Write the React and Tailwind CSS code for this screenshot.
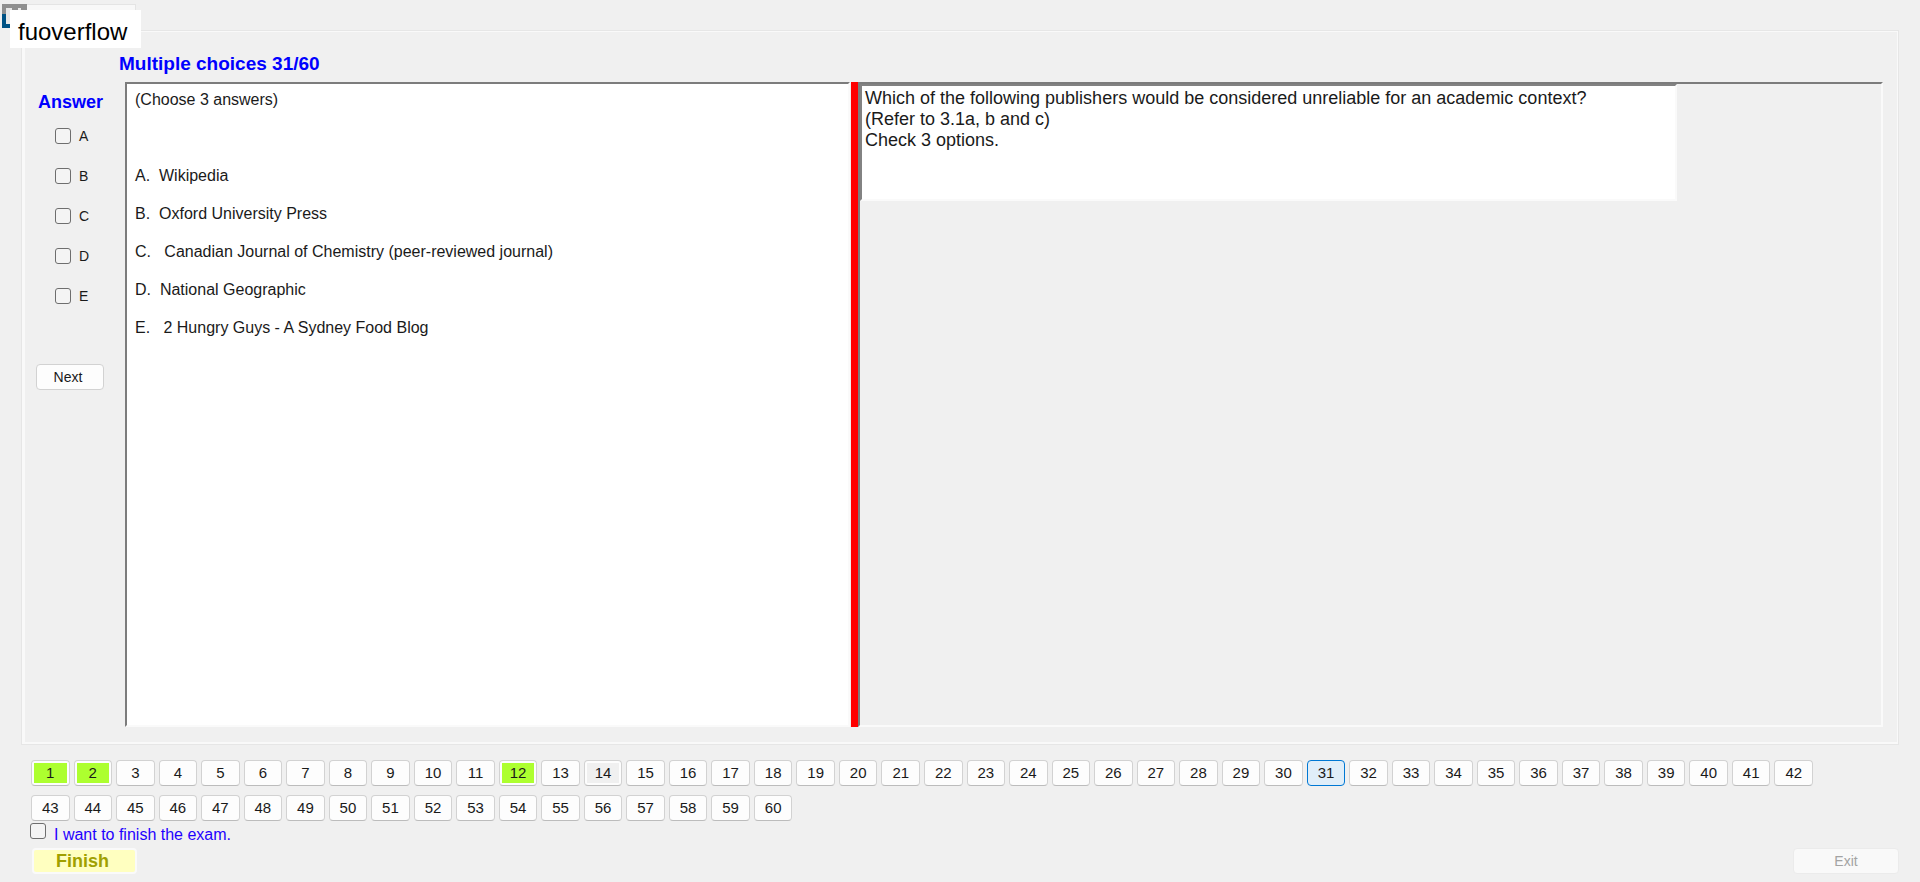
import React from "react";

const choices = ["A", "B", "C", "D", "E"];

const options = [
  "A.  Wikipedia",
  "B.  Oxford University Press",
  "C.   Canadian Journal of Chemistry (peer-reviewed journal)",
  "D.  National Geographic",
  "E.   2 Hungry Guys - A Sydney Food Blog",
];

const answered = [1, 2, 12];
const visited = 14;
const current = 31;

function Box({ id }) {
  return (
    <input
      id={id}
      type="checkbox"
      className="size-4 shrink-0 appearance-none rounded-[3px] border border-[#6e6e6e] bg-[#f4f4f4] checked:bg-[#0067c0]"
    />
  );
}

function QuestionButton({ n }) {
  const isCurrent = n === current;
  const frame = isCurrent
    ? "border-[#0078d4] bg-[#e0eef9]"
    : "border-[#d2d2d2] border-b-[#bcbcbc] bg-[#fdfdfd]";
  const fill = answered.includes(n)
    ? "bg-[#adff2f]"
    : n === visited
      ? "bg-[#f0f0f0]"
      : "";
  return (
    <button type="button" className={"h-[26px] rounded-[4px] border p-[2px] text-[15px] leading-5 text-[#1a1a1a] " + frame}>
      <span className={"flex h-full items-center justify-center " + fill}>{n}</span>
    </button>
  );
}

export default function App() {
  const numbers = Array.from({ length: 60 }, (_, i) => i + 1);
  return (
    <div className="relative flex min-h-screen flex-col bg-[#f0f0f0] px-[21px] pb-2 pt-[30px] font-['Liberation_Sans',Arial,sans-serif] text-[#1a1a1a]">
      <div className="absolute left-[2px] top-1 h-6 w-[134px] border-r border-t border-[#e4e4e4] bg-[#f8f8f8]" />
      <svg className="absolute left-[2px] top-1" width="25" height="24" viewBox="0 0 25 24" aria-hidden="true">
        <path d="M0 0h25v10H0z" fill="#8f8f8f" />
        <path d="M0 10h25v14H0z" fill="#005284" />
        <path d="M4 4h6v16H4zM16 4h3v16h-3z" fill="#e8e8e8" />
      </svg>
      <div className="absolute left-[10px] top-[10px] flex h-[38px] w-[131px] items-center bg-white pl-2 pt-1.5 text-2xl leading-7 text-black">
        fuoverflow
      </div>

      <main className="flex grow flex-col border border-[#e6e6e6] pb-[17px] pr-[15px] shadow-[inset_3px_1px_0_#f9f9f9,inset_-1px_-2px_0_#f9f9f9]">
        <h1 className="pb-[7px] pl-[97px] pt-[22px] text-[19px] font-bold leading-[22px] text-[#0000ff]">
          Multiple choices 31/60
        </h1>
        <div className="flex grow">
          <section className="flex w-[103px] shrink-0 flex-col pl-[14px] pt-[9px]">
            <h2 className="pl-[2px] text-lg font-bold leading-[22px] text-[#0000ff]">Answer</h2>
            <div className="flex flex-col gap-5 pl-[19px] pt-[13px]">
              {choices.map((c) => (
                <label key={c} className="flex h-5 items-center gap-2 text-[14px] leading-5">
                  <Box id={"choice-" + c} />
                  {c}
                </label>
              ))}
            </div>
            <button type="button" className="mt-[58px] h-[26px] w-[68px] rounded-[4px] border border-[#d2d2d2] bg-[#fdfdfd] pr-1 text-[14px] leading-5">
              Next
            </button>
          </section>

          <section className="flex w-[725px] shrink-0 flex-col border-2 border-b-[#fafafa] border-l-[#7c7c7c] border-r-[#fafafa] border-t-[#7c7c7c] bg-white pl-2 pt-[7px] text-base leading-[18px]">
            <p>(Choose 3 answers)</p>
            <ul className="flex flex-col gap-5 whitespace-pre pt-[58px]">
              {options.map((o) => (
                <li key={o}>{o}</li>
              ))}
            </ul>
          </section>

          <div className="ml-px w-[7px] shrink-0 bg-[#ff0000]" />

          <section className="grow border-2 border-b-[#fafafa] border-l-[#7c7c7c] border-r-[#fafafa] border-t-[#7c7c7c]">
            <div className="h-[117px] w-[817px] border-2 border-b-[#fafafa] border-l-[#828282] border-r-[#fafafa] border-t-[#828282] bg-white pl-[3px] pt-[2px] text-lg leading-[21px]">
              <p>Which of the following publishers would be considered unreliable for an academic context?</p>
              <p>(Refer to 3.1a, b and c)</p>
              <p>Check 3 options.</p>
            </div>
          </section>
        </div>
      </main>

      <nav className="grid grid-cols-[repeat(42,minmax(0,1fr))] gap-x-1 gap-y-[9px] pl-[10px] pr-[86px] pt-[15px]">
        {numbers.map((n) => (
          <QuestionButton key={n} n={n} />
        ))}
      </nav>

      <footer>
        <label className="flex h-[27px] items-start gap-2 pl-[9px] pt-[2px] text-base leading-6 text-[#1f00ff]">
          <Box id="finish-exam" />
          I want to finish the exam.
        </label>
        <div className="flex justify-between pl-[11px]">
          <button type="button" className="h-[26px] w-[105px] rounded-[4px] border-2 border-[#fafafa] bg-[#ffffc0] pr-1 text-lg font-bold leading-5 text-[#a0a000]">
            Finish
          </button>
          <button type="button" disabled className="h-[26px] w-[106px] rounded-[4px] border border-[#ebebeb] bg-[#f9f9f9] text-[14px] leading-5 text-[#a3a3a3]">
            Exit
          </button>
        </div>
      </footer>
    </div>
  );
}
